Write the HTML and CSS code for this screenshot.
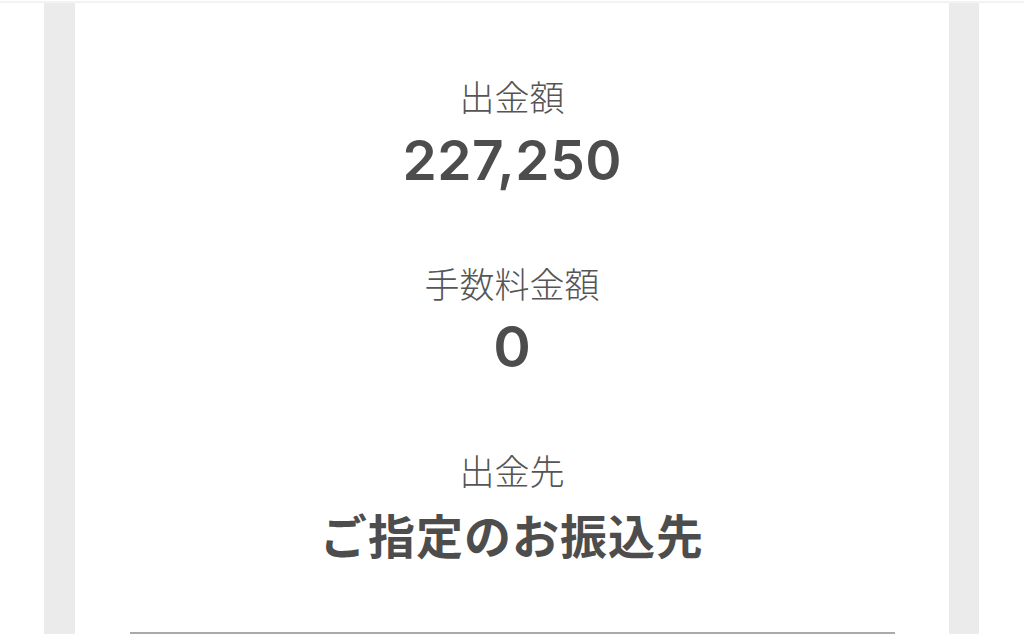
FILE: index.html
```html
<!DOCTYPE html>
<html lang="ja">
<head>
    <meta charset="UTF-8">
    <meta name="viewport" content="width=device-width, initial-scale=1.0">
    <title>出金内容の確認</title>
    <link rel="stylesheet" href="styles.css">
</head>
<body>
    <div class="top-rule"></div>
    <div class="page">
        <div class="side-strip"></div>
        <main class="sheet">
            <div class="detail">
                <div class="detail-label">出金額</div>
                <div class="detail-value num">227,250</div>
            </div>
            <div class="detail">
                <div class="detail-label">手数料金額</div>
                <div class="detail-value num zero">0</div>
            </div>
            <div class="detail">
                <div class="detail-label">出金先</div>
                <div class="detail-value jp">ご指定のお振込先</div>
            </div>
            <div class="divider"></div>
        </main>
        <div class="side-strip"></div>
    </div>
</body>
</html>
```

FILE: styles.css
```css
body, html {
    margin: 0;
    padding: 0;
    background-color: #fff;
    font-family: 'Noto Sans CJK JP', 'Noto Sans', sans-serif;
    height: 100%;
    overflow: hidden;
}
.top-rule {
    height: 2px;
    margin-top: 1px;
    background-color: #f3f3f3;
}
.page {
    display: flex;
    padding: 0 45px 0 44px;
    height: calc(100% - 3px);
}
.side-strip {
    width: 31px;
    flex-shrink: 0;
    background-color: #ebebeb;
}
.side-strip:last-child {
    width: 30px;
}
.sheet {
    flex: 1;
    display: flex;
    flex-direction: column;
    align-items: center;
    padding-top: 68px;
    background-color: #fff;
}
.detail {
    display: flex;
    flex-direction: column;
    align-items: center;
    height: 190px;
}
.detail-label {
    font-size: 35px;
    font-weight: 300;
    line-height: 50px;
    color: #555;
}
.detail-value {
    color: #4d4d4d;
    line-height: 78px;
}
.num {
    font-family: Inter, 'Liberation Sans', sans-serif;
    font-size: 55px;
    font-weight: 600;
    letter-spacing: 0.5px;
    margin-right: -0.5px;
}
.zero {
    font-size: 57px;
}
.jp {
    font-size: 47px;
    font-weight: 600;
    letter-spacing: 1px;
}
.divider {
    align-self: stretch;
    height: 2px;
    margin: 0 54px 0 55px;
    margin-top: auto;
    background-color: #aaa;
}
```
